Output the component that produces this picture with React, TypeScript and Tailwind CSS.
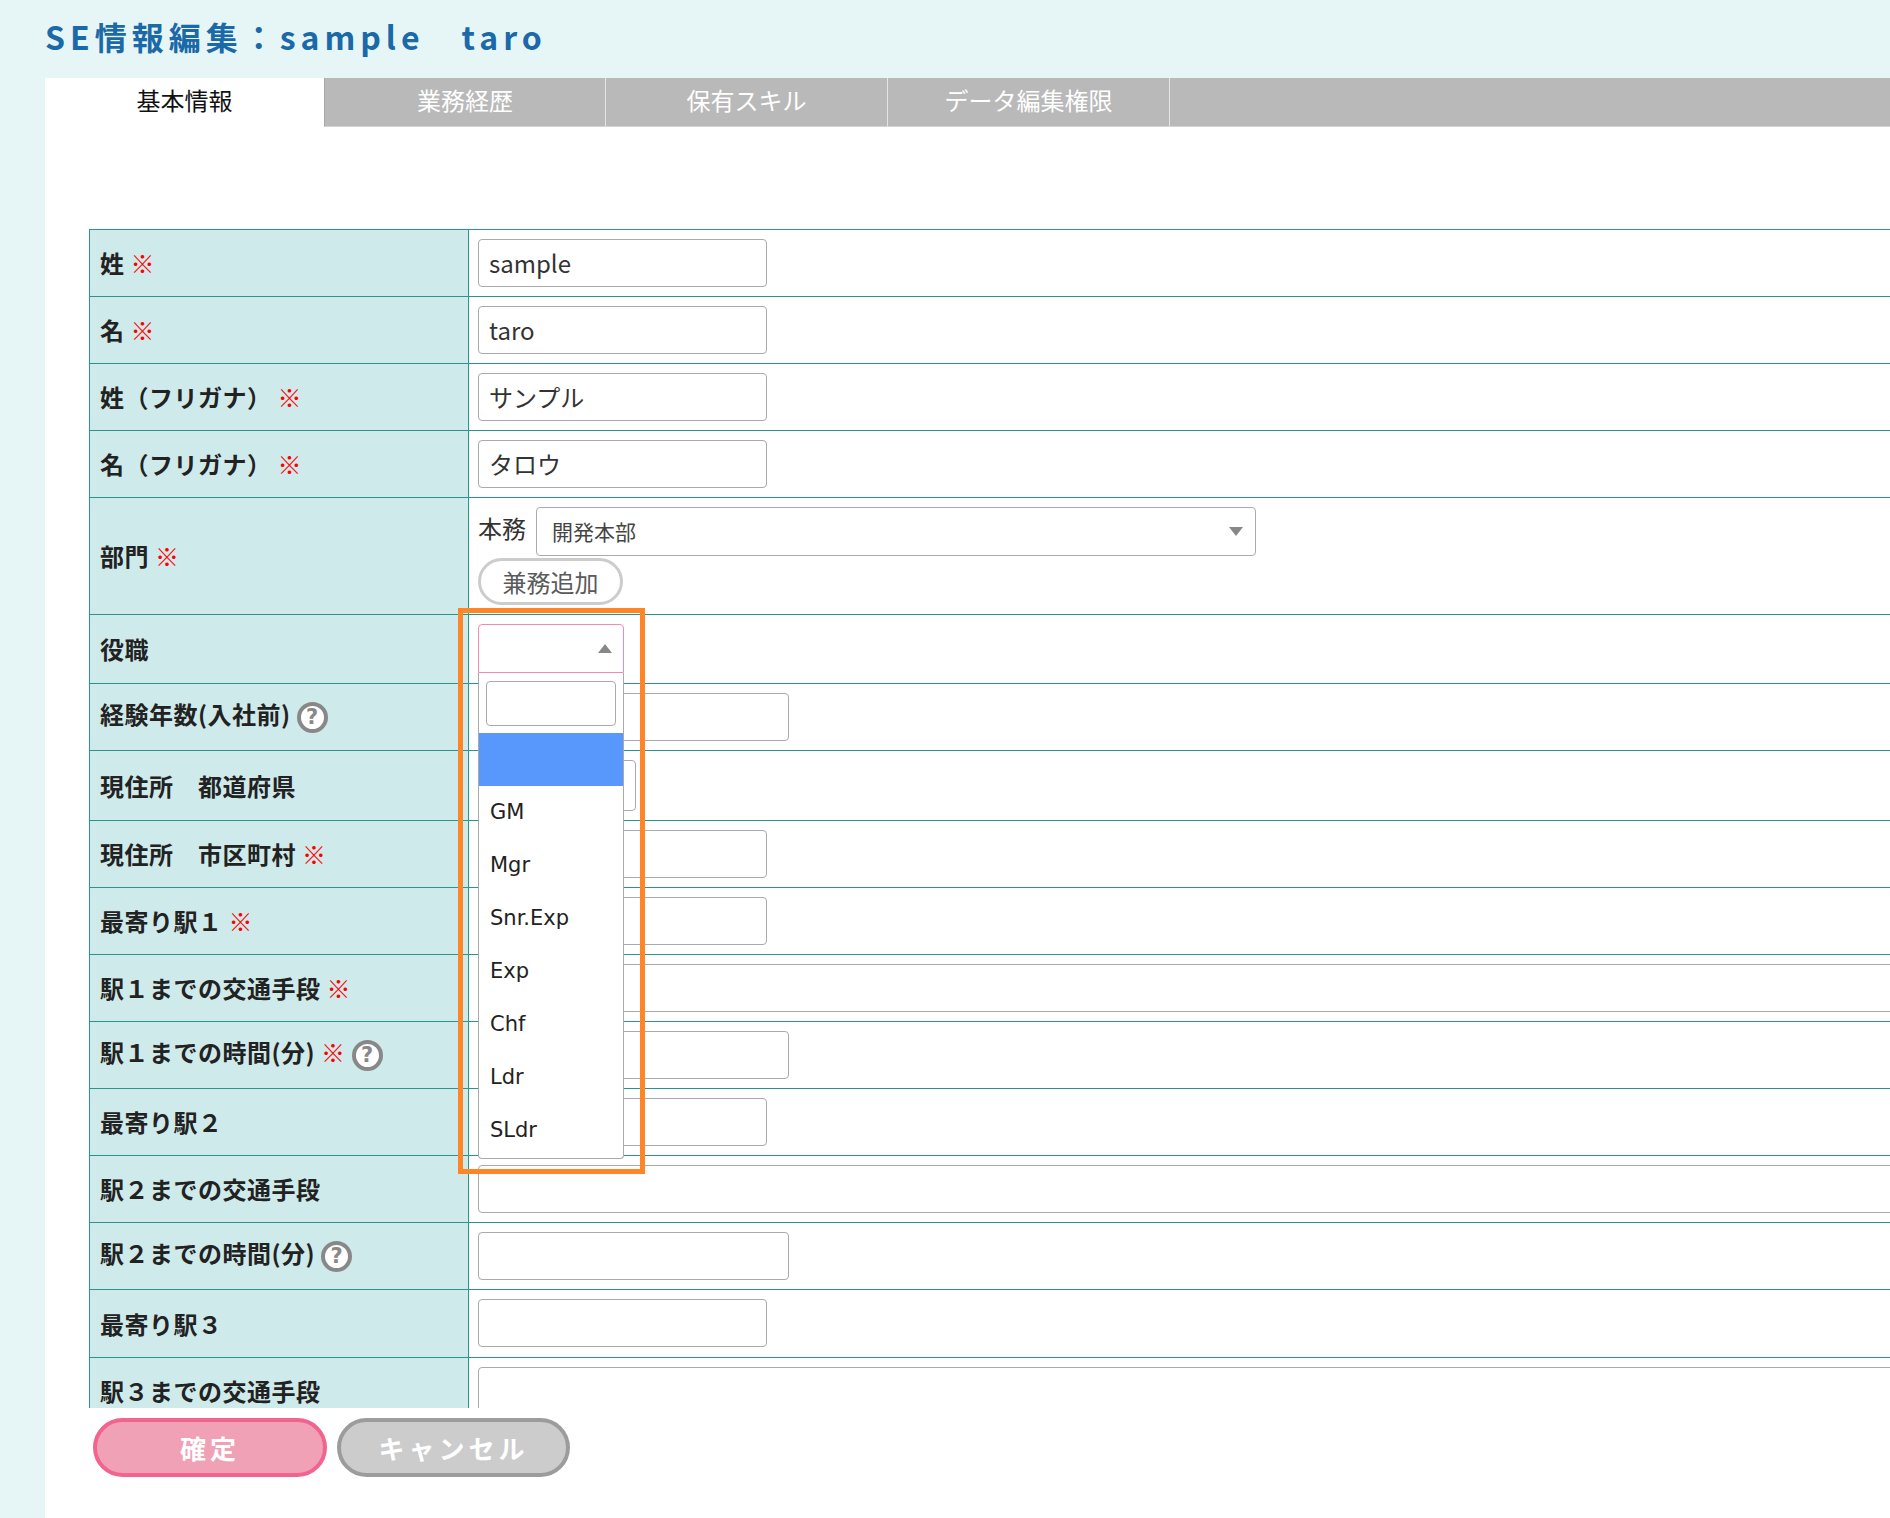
import React from "react";

const teal = "border-[#2a958d]";

function Req() {
  return <span className="text-[#ff0000] font-normal">※</span>;
}

function Help() {
  return (
    <span className="inline-flex w-[31px] h-[31px] rounded-full border-[4px] border-[#888888] bg-white text-[#888888] font-bold text-[21px] leading-none items-center justify-center align-middle font-['DejaVu_Sans',sans-serif] tracking-normal">
      ?
    </span>
  );
}

function TextInput({ value = "", w = "w-[289px]" }: { value?: string; w?: string }) {
  return (
    <div
      className={`${w} h-[48px] border border-[#aaaaaa] rounded-[4px] bg-white px-[10px] flex items-center text-[24px] text-[#333] leading-none`}
    >
      {value}
    </div>
  );
}

type Row = { label: React.ReactNode; h: string; content: React.ReactNode };

const options = ["GM", "Mgr", "Snr.Exp", "Exp", "Chf", "Ldr", "SLdr"];

function PositionSelect() {
  return (
    <div className="relative w-[146px]">
      <div className="h-[49px] border border-[#f08cb4] rounded-t-[4px] bg-white flex items-center justify-end pr-[11px]">
        <div className="w-0 h-0 border-x-[7px] border-x-transparent border-b-[9px] border-b-[#888888]" />
      </div>
      <div className="absolute left-0 top-[49px] w-[146px] h-[486px] z-10 bg-white border border-t-0 border-[#aaaaaa] rounded-b-[4px] overflow-hidden">
        <div className="px-[7px] pt-[8px] pb-[7px]">
          <div className="h-[45px] border border-[#aaaaaa] rounded-[4px] bg-white" />
        </div>
        <div className="h-[53px] bg-[#5897fb]" />
        {options.map((o) => (
          <div
            key={o}
            className="h-[53px] flex items-center pl-[11px] text-[21px] text-[#222] font-['DejaVu_Sans',sans-serif]"
          >
            {o}
          </div>
        ))}
      </div>
    </div>
  );
}

export default function App() {
  const rows: Row[] = [
    { label: <>姓 <Req /></>, h: "h-[67px]", content: <TextInput value="sample" /> },
    { label: <>名 <Req /></>, h: "h-[67px]", content: <TextInput value="taro" /> },
    { label: <>姓（フリガナ） <Req /></>, h: "h-[67px]", content: <TextInput value="サンプル" /> },
    { label: <>名（フリガナ） <Req /></>, h: "h-[67px]", content: <TextInput value="タロウ" /> },
    {
      label: <>部門 <Req /></>,
      h: "h-[117px]",
      content: (
        <div className="flex flex-col">
          <div className="flex items-start gap-[10px]">
            <span className="text-[24px] text-[#333] leading-none pt-[9px]">本務</span>
            <div className="w-[720px] h-[49px] border border-[#aaaaaa] rounded-[4px] bg-white flex items-center justify-between pl-[15px] pr-[12px]">
              <span className="text-[21px] text-[#444] leading-none">開発本部</span>
              <div className="w-0 h-0 border-x-[7px] border-x-transparent border-t-[9px] border-t-[#888888]" />
            </div>
          </div>
          <div className="mt-[2px] w-[145px] h-[47px] rounded-full border-[3px] border-[#cccccc] bg-white flex items-center justify-center text-[24px] text-[#5a5a5a] leading-none">
            兼務追加
          </div>
        </div>
      ),
    },
    { label: <>役職</>, h: "h-[69px]", content: <PositionSelect /> },
    {
      label: <>経験年数(入社前) <Help /></>,
      h: "h-[67px]",
      content: <TextInput w="w-[311px]" />,
    },
    {
      label: <>現住所　都道府県</>,
      h: "h-[70px]",
      content: <div className="w-[158px] h-[51px] border border-[#aaaaaa] rounded-[4px] bg-white" />,
    },
    { label: <>現住所　市区町村 <Req /></>, h: "h-[67px]", content: <TextInput /> },
    { label: <>最寄り駅１ <Req /></>, h: "h-[67px]", content: <TextInput /> },
    { label: <>駅１までの交通手段 <Req /></>, h: "h-[67px]", content: <TextInput w="w-[1500px]" /> },
    {
      label: <>駅１までの時間(分) <Req /> <Help /></>,
      h: "h-[67px]",
      content: <TextInput w="w-[311px]" />,
    },
    { label: <>最寄り駅２</>, h: "h-[67px]", content: <TextInput /> },
    { label: <>駅２までの交通手段</>, h: "h-[67px]", content: <TextInput w="w-[1500px]" /> },
    { label: <>駅２までの時間(分) <Help /></>, h: "h-[67px]", content: <TextInput w="w-[311px]" /> },
    { label: <>最寄り駅３</>, h: "h-[68px]", content: <TextInput /> },
    { label: <>駅３までの交通手段</>, h: "h-[67px]", content: <TextInput w="w-[1500px]" /> },
  ];

  return (
    <div className="relative w-full min-h-[1518px] overflow-hidden bg-[#e6f6f6] font-['Noto_Sans_CJK_JP','Noto_Sans',sans-serif]">
      <h1 className="h-[78px] pl-[45px] flex items-center text-[32px] font-bold tracking-[5px] text-[#1b69a8] leading-none pb-[6px]">
        SE情報編集：sample　taro
      </h1>
      <div className="ml-[45px] bg-white min-h-[1440px]">
        <div className="flex h-[49px]">
          <div className="w-[279px] h-[49px] bg-white flex items-center justify-center text-[24px] text-[#111] leading-none pb-[5px]">
            基本情報
          </div>
          {["業務経歴", "保有スキル", "データ編集権限"].map((t, i) => (
            <div
              key={t}
              className={`w-[282px] bg-[#b9b9b9] border-b border-b-[#d4d4d4] flex items-center justify-center text-[24px] text-white leading-none pb-[5px] border-r border-r-[#e4e4e4] ${i === 0 ? "border-l border-l-[#a8a8a8]" : ""}`}
            >
              {t}
            </div>
          ))}
          <div className="flex-1 bg-[#b9b9b9] border-b border-b-[#d4d4d4]" />
        </div>

        <div className="pt-[102px] pl-[44px]">
          <div className="h-[1179px] overflow-hidden">
            <div className={`w-[1850px] border-t border-l ${teal}`}>
              {rows.map((r, i) => (
                <div key={i} className={`flex ${r.h} border-b ${teal}`}>
                  <div
                    className={`w-[379px] shrink-0 bg-[#cfeaea] border-r ${teal} flex items-center pl-[10px] text-[24px] font-bold text-[#222] leading-none tracking-[0.5px] whitespace-pre`}
                  >
                    <span>{r.label}</span>
                  </div>
                  <div className="flex-1 bg-white pl-[9px] pt-[9px]">{r.content}</div>
                </div>
              ))}
            </div>
          </div>

          <div className="flex gap-[10px] mt-[10px] ml-[4px]">
            <div className="w-[234px] h-[59px] rounded-full border-[4px] border-[#f0648f] bg-[#f0a1b5] flex items-center justify-center text-white font-bold text-[26px] tracking-[4px] leading-none">
              確定
            </div>
            <div className="w-[233px] h-[59px] rounded-full border-[4px] border-[#9c9c9c] bg-[#cccccc] flex items-center justify-center text-white font-bold text-[26px] tracking-[4px] leading-none">
              キャンセル
            </div>
          </div>
        </div>
      </div>

      <div className="absolute left-[458px] top-[608px] w-[187px] h-[566px] border-[5px] border-[#ff8526] z-20 pointer-events-none" />
    </div>
  );
}
